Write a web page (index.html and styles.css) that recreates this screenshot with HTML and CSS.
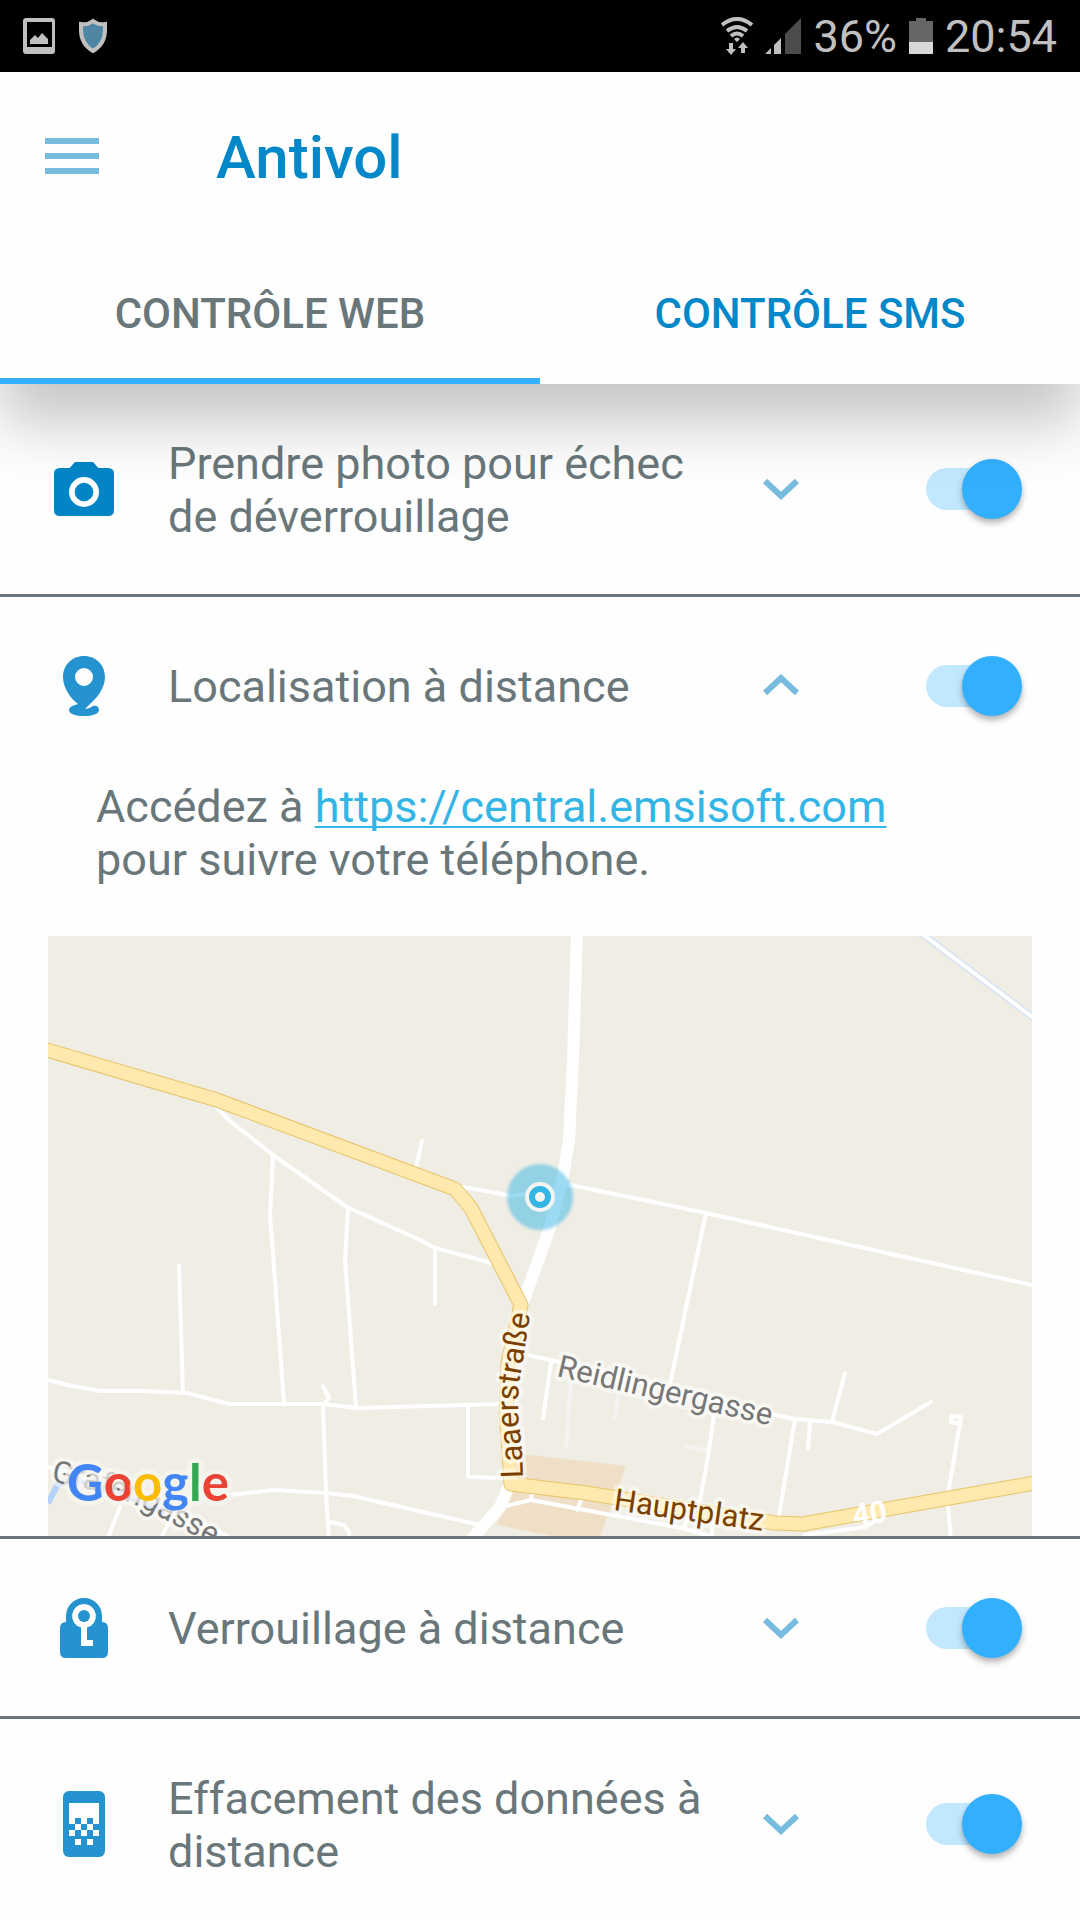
FILE: index.html
```html
<!DOCTYPE html>
<html lang="fr">
<head>
<meta charset="utf-8">
<meta name="viewport" content="width=device-width, initial-scale=1">
<title>Antivol</title>
<link rel="stylesheet" href="styles.css">
</head>
<body>
<div class="status">
  <div class="status-group status-left">
    <svg width="32" height="36" viewBox="0 0 32 36" aria-hidden="true">
      <path fill="#c0c0c0" fill-rule="evenodd" d="M3 0H29Q32 0 32 3V33Q32 36 29 36H3Q0 36 0 33V3Q0 0 3 0ZM4 4V29H29V4Z"/>
      <path fill="#c0c0c0" d="M7 26V22L12 17L15 20L19 15L25 21V26Z"/>
    </svg>
    <svg width="28" height="36" viewBox="0 0 28 36" aria-hidden="true">
      <path fill="#4f86a3" stroke="#c0c0c0" stroke-width="4" d="M14 3Q9 7 2 6V12Q2 26 14 33Q26 26 26 12V6Q19 7 14 3Z"/>
    </svg>
  </div>
  <div class="status-group">
    <svg width="32" height="38" viewBox="0 0 32 38" aria-hidden="true">
      <g fill="none" stroke="#c0c0c0" stroke-width="4">
        <path d="M1 8Q16 -4 31 8"/><path d="M6 14Q16 6 26 14"/><path d="M10 19Q16 14 22 19"/>
      </g>
      <path fill="#c0c0c0" d="M13 22Q16 19 19 22L16 25ZM8 26H12V32H15L10 38L5 32H8ZM20 36V31H17L22 25L27 31H24V36Z"/>
    </svg>
    <svg width="36" height="36" viewBox="0 0 36 36" aria-hidden="true">
      <path fill="#4c4c4c" d="M20 16L36 0V36H20Z"/>
      <path fill="#c0c0c0" d="M0 36L6 30V36ZM9 27L16 20V36H9Z"/>
    </svg>
    <span>36%</span>
    <svg width="24" height="36" viewBox="0 0 24 36" aria-hidden="true">
      <path fill="#666" d="M7 0H17V3H24V24H0V3H7Z"/><path fill="#d8d8d8" d="M0 24H24V36H0Z"/>
    </svg>
    <time>20:54</time>
  </div>
</div>

<header class="header">
  <div class="toolbar">
    <button class="menu" aria-label="Menu">
      <svg width="54" height="36" viewBox="0 0 54 36" aria-hidden="true"><path fill="#77bbdf" d="M0 0H54V6H0ZM0 15H54V21H0ZM0 30H54V36H0Z"/></svg>
    </button>
    <h1 class="title">Antivol</h1>
  </div>
  <div class="tabs" role="tablist">
    <button class="tab tab-active" role="tab" aria-selected="true">CONTRÔLE WEB</button>
    <button class="tab" role="tab" aria-selected="false">CONTRÔLE SMS</button>
  </div>
</header>

<main class="list">
  <section class="item">
    <div class="row">
      <svg class="icon icon-strong" viewBox="0 0 24 24" aria-hidden="true">
        <path fill-rule="evenodd" d="M9 3L7.2 5H4Q2 5 2 7V19Q2 21 4 21H20Q22 21 22 19V7Q22 5 20 5H16.8L15 3ZM12 8A5 5 0 1 0 12 18A5 5 0 1 0 12 8Z"/>
        <circle cx="12" cy="13" r="3.1"/>
      </svg>
      <label class="label" for="photo">Prendre photo pour échec de déverrouillage</label>
      <button class="expand" aria-label="Développer" aria-expanded="false"><svg width="36" height="24" viewBox="0 0 36 24" aria-hidden="true"><path d="M2 4L18 19L34 4"/></svg></button>
      <input class="switch" type="checkbox" role="switch" id="photo" checked>
    </div>
  </section>

  <section class="item">
    <div class="row">
      <svg class="icon" viewBox="0 0 72 72" aria-hidden="true">
        <path fill-rule="evenodd" d="M36 6C24 6 15 15 15 27C15 38 23 49 30 54Q21 56 21 60C21 64 28 66 36 66S51 64 51 60C51 56 48 55 45 56C42 58 39 59 37 59L42 54C49 48 57 38 57 27C57 15 48 6 36 6ZM36 18A9 9 0 1 1 36 36A9 9 0 1 1 36 18Z"/>
      </svg>
      <label class="label" for="locate">Localisation à distance</label>
      <button class="expand" aria-label="Réduire" aria-expanded="true"><svg width="36" height="24" viewBox="0 0 36 24" aria-hidden="true"><path d="M2 19L18 4L34 19"/></svg></button>
      <input class="switch" type="checkbox" role="switch" id="locate" checked>
    </div>
    <p class="detail">Accédez à <a href="https://central.emsisoft.com">https://central.emsisoft.com</a> pour suivre votre téléphone.</p>
    <svg class="map" viewBox="48 936 984 600" role="img" aria-label="Carte">
      <defs>
        <path id="laaer" d="M523 1478Q522 1440 519 1425Q517 1400 520 1378Q525 1350 532 1300"/>
        <path id="grafen" d="M51 1482Q100 1489 145 1509L225 1552"/>
        <filter id="soft" x="-20%" y="-20%" width="140%" height="140%"><feGaussianBlur stdDeviation="1.5"/></filter>
      </defs>
      <rect x="48" y="936" width="984" height="600" fill="#efede4"/>
      <path fill="#f0dfc7" d="M512 1453L626 1466L600 1537H557L497 1525L510 1500Z"/>
      <path class="stream-edge" d="M917 930L1040 1023"/>
      <path class="stream" d="M917 930L1040 1023"/>
      <g class="faint">
        <path d="M571 1380L566 1447M619 1393L615 1417M686 1446L707 1451"/>
      </g>
      <path fill="none" stroke="#b3d2ff" stroke-width="6" d="M48 1503L58 1484L90 1480L130 1497L165 1512"/>
      <g class="street">
        <path d="M217 1108L230 1121L273 1155L347 1207L420 1240L435 1248L492 1263"/>
        <path d="M273 1155L270 1217L272 1240L284 1403M348 1207L345 1260L356 1407"/>
        <path d="M422 1141L416 1168M463 1187L513 1196L571 1185L706 1213L1036 1286M706 1213L670 1384"/>
        <path d="M435 1250V1304M179 1266L183 1393"/>
        <path d="M44 1379L68 1385L100 1391H143L187 1393L229 1404H323L357 1408L502 1404"/>
        <path d="M323 1386L329 1398L323 1405L326 1493L329 1540M329 1522L344 1525L349 1532V1540"/>
        <path d="M468 1405V1477L503 1478M48 1467L90 1480M230 1495L273 1490L327 1493L353 1496L480 1525"/>
        <path d="M120 1507L108 1538M170 1520L161 1538M205 1524L234 1540"/>
        <path d="M527 1355L560 1362L775 1415L795 1419L832 1422L877 1434L931 1402M832 1422L845 1373"/>
        <path d="M551 1363L543 1418M810 1422L808 1449M795 1419L779 1516M714 1415L708 1457L700 1500L683 1528"/>
        <path d="M960 1424L951 1422V1416L961 1417L948 1494V1507L951 1540"/>
        <path d="M502 1507L531 1500L682 1528L713 1537M531 1500L532 1492M582 1498L577 1510M712 1533V1515"/>
        <path d="M805 1535L865 1527L889 1513"/>
      </g>
      <path class="avenue" d="M577 930L573 1060L569 1140L563 1176L549 1230L523 1303M508 1488L500 1507L471 1540"/>
      <path class="main-edge" d="M40 1048L217 1100L455 1189L471 1208L521 1305L508 1363L506 1410L511 1484L586 1493L775 1523L803 1524L1040 1482"/>
      <path class="main-road" d="M40 1048L217 1100L455 1189L471 1208L521 1305L508 1363L506 1410L511 1484L586 1493L775 1523L803 1524L1040 1482"/>
      <g class="map-label">
        <text class="major"><textPath href="#laaer">Laaerstraße</textPath></text>
        <text class="minor" transform="translate(556 1376) rotate(13)">Reidlingergasse</text>
        <text class="major" transform="translate(613 1510) rotate(8)">Hauptplatz</text>
        <text class="minor"><textPath href="#grafen">Grafengasse</textPath></text>
      </g>
      <text class="route" transform="translate(854 1526) rotate(-8)">40</text>
      <text class="logo" x="67" y="1501"><tspan fill="#4285f4">G</tspan><tspan fill="#ea4335">o</tspan><tspan fill="#fbbc05">o</tspan><tspan fill="#4285f4">g</tspan><tspan fill="#34a853">l</tspan><tspan fill="#ea4335">e</tspan></text>
      <circle cx="540" cy="1197" r="33" fill="#38b6e6" fill-opacity=".5" filter="url(#soft)"/>
      <circle cx="540" cy="1197" r="15" fill="#f4f4f0"/>
      <circle cx="540" cy="1197" r="8" fill="#f4f4f0" stroke="#33b5e5" stroke-width="6"/>
    </svg>
  </section>

  <section class="item">
    <div class="row">
      <svg class="icon" viewBox="0 0 72 72" aria-hidden="true">
        <path fill-rule="evenodd" d="M18 30V24A18 18 0 0 1 54 24V30Q60 30 60 36V60Q60 66 54 66H18Q12 66 12 60V36Q12 30 18 30ZM36 12A12 12 0 0 0 33 35.600V54H45V48H39V35.600A12 12 0 0 0 36 12Z"/>
        <circle cx="36" cy="24" r="6"/>
      </svg>
      <label class="label" for="lock">Verrouillage à distance</label>
      <button class="expand" aria-label="Développer" aria-expanded="false"><svg width="36" height="24" viewBox="0 0 36 24" aria-hidden="true"><path d="M2 4L18 19L34 4"/></svg></button>
      <input class="switch" type="checkbox" role="switch" id="lock" checked>
    </div>
  </section>

  <section class="item">
    <div class="row">
      <svg class="icon" viewBox="0 0 72 72" aria-hidden="true">
        <rect x="15" y="3" width="42" height="66" rx="6"/>
        <path fill="#fff" d="M21 15H51V36H45V42H39V36H33V42H27V36H21ZM21 42H27V48H21ZM33 42H39V48H33ZM45 42H51V48H45ZM27 51H33V57H27ZM39 51H45V57H39Z"/>
        <path d="M27 30H33V36H27ZM39 30H45V36H39Z"/>
      </svg>
      <label class="label" for="wipe">Effacement des données à distance</label>
      <button class="expand" aria-label="Développer" aria-expanded="false"><svg width="36" height="24" viewBox="0 0 36 24" aria-hidden="true"><path d="M2 4L18 19L34 4"/></svg></button>
      <input class="switch" type="checkbox" role="switch" id="wipe" checked>
    </div>
  </section>
</main>
</body>
</html>
```

FILE: styles.css
```css
* {
  box-sizing: border-box;
}

body {
  margin: 0;
  height: 100vh;
  display: flex;
  flex-direction: column;
  background: #fefefe;
  color: #69777a;
  font-family: Roboto, "Liberation Sans", sans-serif;
  font-size: 45px;
  line-height: 53px;
}

button {
  margin: 0;
  padding: 0;
  border: 0;
  background: none;
  font: inherit;
  color: inherit;
  cursor: pointer;
}

svg {
  display: block;
}

/* Status bar */
.status {
  flex: none;
  display: flex;
  justify-content: space-between;
  align-items: center;
  height: 72px;
  padding: 0 23px;
  background: #000;
  color: #c0c0c0;
}

.status-group {
  display: flex;
  align-items: center;
  gap: 12px;
}

.status-left {
  gap: 24px;
}

/* Header */
.header {
  position: relative;
  z-index: 1;
  flex: none;
  background: #fefefe;
  box-shadow: 0 40px 56px rgba(0, 0, 0, 0.22);
}

.toolbar {
  display: flex;
  align-items: center;
  gap: 117px;
  height: 168px;
  padding: 0 45px;
}

.title {
  margin: 0;
  padding-top: 4px;
  color: #0288c9;
  font-size: 60px;
  font-weight: 500;
  line-height: 70px;
}

.tabs {
  display: grid;
  grid-template-columns: 1fr 1fr;
  height: 144px;
}

.tab {
  padding-top: 3px;
  color: #0288c9;
  font-size: 42px;
  font-weight: 500;
  line-height: 50px;
}

.tab-active {
  color: #69777a;
  box-shadow: inset 0 -6px #33b1ff;
}

/* Feature list */
.list {
  flex: 1;
  min-height: 0;
  overflow-y: auto;
  scrollbar-width: none;
}

.item {
  border-bottom: 3px solid #69777a;
}

.row {
  display: flex;
  align-items: center;
  min-height: 177px;
  padding: 52px 58px 52px 48px;
}

.icon {
  flex: none;
  width: 72px;
  height: 72px;
  margin: -10px 48px -10px 0;
  fill: #2493cf;
}

.icon-strong {
  fill: #0285c7;
}

.label {
  flex: 1;
  margin: 1px 24px -1px 0;
}

.expand {
  flex: none;
  display: grid;
  place-items: center;
  width: 72px;
  height: 72px;
  margin: -10px 109px -10px 0;
}

.expand path {
  fill: none;
  stroke: #77bbdf;
  stroke-width: 6;
}

.switch {
  appearance: none;
  flex: none;
  display: flex;
  align-items: center;
  justify-content: flex-end;
  width: 96px;
  height: 42px;
  margin: 0;
  border-radius: 21px;
  background: linear-gradient(90deg, #c2e8ff 75%, transparent 75%);
  cursor: pointer;
}

.switch::before {
  content: "";
  flex: none;
  width: 60px;
  height: 60px;
  border-radius: 50%;
  background: #33b0fd;
  box-shadow: 0 4px 6px rgba(0, 0, 0, 0.3);
}

.switch:not(:checked) {
  justify-content: flex-start;
}

.detail {
  margin: 0;
  padding: 6px 96px 50px;
}

.detail a {
  color: #33b5e5;
  text-decoration-thickness: 2px;
  text-underline-offset: 4px;
  text-decoration-skip-ink: none;
}

/* Map */
.map {
  width: calc(100% - 96px);
  margin: 0 48px;
}

.street,
.faint,
.avenue,
.stream,
.stream-edge,
.main-edge,
.main-road {
  fill: none;
  stroke: #fff;
  stroke-width: 4;
  stroke-linejoin: round;
  stroke-linecap: round;
}

.faint {
  stroke: #f4f3f1;
}

.avenue {
  stroke-width: 12;
}

.stream {
  stroke-width: 4;
}

.stream-edge {
  stroke: #d6e2f2;
  stroke-width: 7;
}

.main-edge {
  stroke: #e6c468;
  stroke-width: 15;
}

.main-road {
  stroke: #ffe9ae;
  stroke-width: 13;
}

.map-label {
  font-size: 31px;
  stroke: rgba(255, 255, 255, 0.5);
  stroke-width: 8;
  stroke-linejoin: round;
  paint-order: stroke;
}

.major {
  fill: #7b3f00;
}

.minor {
  fill: #777;
}

.route {
  fill: #fff;
  font-size: 30px;
  font-weight: 700;
}

.logo {
  font-family: Lato, Roboto, sans-serif;
  font-size: 51px;
  font-weight: 700;
  stroke: rgba(247, 245, 240, 0.7);
  stroke-width: 10;
  stroke-linejoin: round;
  paint-order: stroke;
}
```
